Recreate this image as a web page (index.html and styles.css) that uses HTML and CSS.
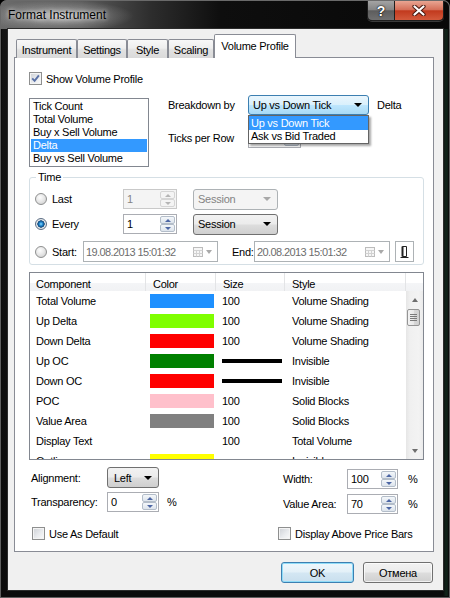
FILE: index.html
```html
<!DOCTYPE html>
<html lang="en">
<head>
<meta charset="utf-8">
<title>Format Instrument</title>
<link rel="stylesheet" href="styles.css">
</head>
<body>
<div class="window">
  <div class="titlebar">
    <div class="title">Format Instrument</div>
    <div class="caps">
      <div class="cap cap-help">?</div>
      <div class="cap cap-close"><svg width="14" height="11" viewBox="0 0 14 11"><path d="M2.5 1.5 L11.5 9.5 M11.5 1.5 L2.5 9.5" stroke="#4a1a10" stroke-width="4.2" stroke-linecap="round"/><path d="M2.5 1.5 L11.5 9.5 M11.5 1.5 L2.5 9.5" stroke="#fff" stroke-width="2.2" stroke-linecap="round"/></svg></div>
    </div>
  </div>
  <div class="client">
    <div class="tabs">
      <div class="tab t-instrument">Instrument</div>
      <div class="tab t-settings">Settings</div>
      <div class="tab t-style">Style</div>
      <div class="tab t-scaling">Scaling</div>
      <div class="tab tab-active t-vp">Volume Profile</div>
    </div>
    <div class="panel">
      <div class="check-row show-vp">
        <span class="cb"><svg width="9" height="9" viewBox="0 0 9 9"><path d="M1.2 4.4 L3.6 6.9 L7.9 1.4" stroke="#5a71a6" stroke-width="1.9" fill="none"/></svg></span>
        <span class="cb-label">Show Volume Profile</span>
      </div>

      <div class="top-row">
        <div class="listbox">
          <div class="li">Tick Count</div>
          <div class="li">Total Volume</div>
          <div class="li">Buy x Sell Volume</div>
          <div class="li li-sel">Delta</div>
          <div class="li">Buy vs Sell Volume</div>
        </div>
        <div class="breakdown">
          <div class="brow">
            <span class="blabel">Breakdown by</span>
            <div class="combo combo-hot w-break">
              <span class="ctext">Up vs Down Tick</span><span class="carrow"></span>
              <div class="droplist">
                <div class="di di-sel">Up vs Down Tick</div>
                <div class="di">Ask vs Bid Traded</div>
              </div>
            </div>
            <span class="delta">Delta</span>
          </div>
          <div class="brow brow2">
            <span class="blabel">Ticks per Row</span>
            <div class="spin w-ticks"><span class="v">1</span><span class="sb"><i class="u"></i><i class="d"></i></span></div>
          </div>
        </div>
      </div>

      <fieldset class="time">
        <legend>Time</legend>
        <div class="trow">
          <span class="radio-l"><span class="radio"></span><span>Last</span></span>
          <div class="spin spin-dis w-tspin"><span class="v">1</span><span class="sb"><i class="u"></i><i class="d"></i></span></div>
          <div class="combo combo-dis w-sess"><span class="ctext">Session</span><span class="carrow"></span></div>
        </div>
        <div class="trow trow2">
          <span class="radio-l"><span class="radio radio-on"></span><span>Every</span></span>
          <div class="spin w-tspin"><span class="v">1</span><span class="sb"><i class="u"></i><i class="d"></i></span></div>
          <div class="combo w-sess"><span class="ctext">Session</span><span class="carrow"></span></div>
        </div>
        <div class="trow trow3">
          <span class="radio-l radio-start"><span class="radio"></span><span>Start:</span></span>
          <div class="dtp w-dtp1"><span class="dtext">19.08.2013 15:01:32</span><svg class="cal" width="10" height="10" viewBox="0 0 10 10"><rect x="0.5" y="0.5" width="9" height="9" fill="#f6f6f6" stroke="#bcbcbc"/><path d="M0.5 3.5H9.5M0.5 6.5H9.5M3.5 3.5V9.5M6.5 3.5V9.5" stroke="#d2d2d2"/></svg><span class="darrow"></span></div>
          <span class="endl">End:</span>
          <div class="dtp w-dtp2"><span class="dtext">20.08.2013 15:01:32</span><svg class="cal" width="10" height="10" viewBox="0 0 10 10"><rect x="0.5" y="0.5" width="9" height="9" fill="#f6f6f6" stroke="#bcbcbc"/><path d="M0.5 3.5H9.5M0.5 6.5H9.5M3.5 3.5V9.5M6.5 3.5V9.5" stroke="#d2d2d2"/></svg><span class="darrow"></span></div>
          <div class="pinbtn"><svg width="9" height="13" viewBox="0 0 9 13"><path d="M2.5 1.5 H6.5 V11.5 H2.5 Z" fill="#fff" stroke="#222"/><path d="M2.5 1.5 V11.5" stroke="#222" stroke-width="2"/><path d="M0.5 12.5 H8.5" stroke="#222"/></svg></div>
        </div>
      </fieldset>

      <div class="grid">
        <div class="ghead">
          <span class="c1">Component</span><span class="c2">Color</span><span class="c3">Size</span><span class="c4">Style</span><span class="c5"></span>
        </div>
        <div class="gbody">
          <div class="rows">
            <div class="row"><span class="c1">Total Volume</span><span class="c2"><i class="sw sw-blue"></i></span><span class="c3">100</span><span class="c4">Volume Shading</span></div>
            <div class="row"><span class="c1">Up Delta</span><span class="c2"><i class="sw sw-lime"></i></span><span class="c3">100</span><span class="c4">Volume Shading</span></div>
            <div class="row"><span class="c1">Down Delta</span><span class="c2"><i class="sw sw-red"></i></span><span class="c3">100</span><span class="c4">Volume Shading</span></div>
            <div class="row"><span class="c1">Up OC</span><span class="c2"><i class="sw sw-green"></i></span><span class="c3"><i class="ln"></i></span><span class="c4">Invisible</span></div>
            <div class="row"><span class="c1">Down OC</span><span class="c2"><i class="sw sw-red"></i></span><span class="c3"><i class="ln"></i></span><span class="c4">Invisible</span></div>
            <div class="row"><span class="c1">POC</span><span class="c2"><i class="sw sw-pink"></i></span><span class="c3">100</span><span class="c4">Solid Blocks</span></div>
            <div class="row"><span class="c1">Value Area</span><span class="c2"><i class="sw sw-gray"></i></span><span class="c3">100</span><span class="c4">Solid Blocks</span></div>
            <div class="row"><span class="c1">Display Text</span><span class="c2"></span><span class="c3">100</span><span class="c4">Total Volume</span></div>
            <div class="row"><span class="c1">Outline</span><span class="c2"><i class="sw sw-yellow"></i></span><span class="c3"></span><span class="c4">Invisible</span></div>
          </div>
          <div class="vscroll">
            <div class="sarrow sup"></div>
            <div class="sthumb"><i></i><i></i><i></i><i></i></div>
            <div class="strack"></div>
            <div class="sarrow sdown"></div>
          </div>
        </div>
      </div>

      <div class="bottom">
        <div class="bleft">
          <div class="lrow lrow1">
            <span class="lab-l">Alignment:</span>
            <div class="combo w-align"><span class="ctext">Left</span><span class="carrow"></span></div>
          </div>
          <div class="lrow lrow2">
            <span class="lab-l">Transparency:</span>
            <div class="spin w-small"><span class="v">0</span><span class="sb"><i class="u"></i><i class="d"></i></span></div>
            <span class="pct">%</span>
          </div>
          <div class="lrow lrow3">
            <span class="cb cb-l"></span><span class="cb-label">Use As Default</span>
          </div>
        </div>
        <div class="bright">
          <div class="lrow rrow1">
            <span class="lab-r">Width:</span>
            <div class="spin w-rspin"><span class="v">100</span><span class="sb"><i class="u"></i><i class="d"></i></span></div>
            <span class="pct-r">%</span>
          </div>
          <div class="lrow rrow2">
            <span class="lab-r">Value Area:</span>
            <div class="spin w-rspin"><span class="v">70</span><span class="sb"><i class="u"></i><i class="d"></i></span></div>
            <span class="pct-r">%</span>
          </div>
          <div class="lrow rrow3">
            <span class="cb"></span><span class="cb-label">Display Above Price Bars</span>
          </div>
        </div>
      </div>
    </div>
    <div class="buttons">
      <div class="btn btn-ok">OK</div>
      <div class="btn btn-cancel">Отмена</div>
    </div>
  </div>
</div>
</body>
</html>
```

FILE: styles.css
```css
* { box-sizing: border-box; }
html, body { margin: 0; padding: 0; }
body {
  width: 450px; height: 598px; overflow: hidden;
  background: #000;
  font-family: "Liberation Sans", Arial, sans-serif;
  font-size: 11px;
  letter-spacing: -0.25px;
  color: #000;
}

/* ---------- window frame ---------- */
.window {
  width: 450px; height: 598px;
  display: flex; flex-direction: column;
  border-radius: 7px 7px 0 0;
  background:
    linear-gradient(90deg, rgba(0,0,0,0) 443px, #11241a 446px, #0a140e 450px),
    linear-gradient(180deg, #141414 0, #0b0b0b 100%);
  box-shadow: inset 0 0 0 1px #5f5f5f, inset 0 0 0 2px #0c0c0c;
}
.titlebar {
  height: 29px; flex: none;
  display: flex; align-items: flex-start;
  border-radius: 7px 7px 0 0;
  border: 1px solid #6a6a6a; border-bottom: 0;
  background:
    radial-gradient(ellipse 75px 16px at 58px 15px, rgba(215,215,215,0.75) 0, rgba(160,160,160,0.35) 60%, rgba(0,0,0,0) 100%),
    linear-gradient(90deg, #6a6a6a 0, #5c5c5c 80px, #2d2d2d 150px, #0e0e0e 220px, #080808 100%);
}
.title {
  margin: 6px 0 0 7px;
  font-size: 12px; line-height: 16px; letter-spacing: 0;
  color: #000;
  text-shadow: 0 0 4px rgba(255,255,255,0.8), 0 0 8px rgba(255,255,255,0.5);
}
.caps {
  margin-left: auto; margin-right: 5px;
  display: flex; height: 20px;
  border: 1px solid #1e1e1e; border-top: 0;
  border-radius: 0 0 5px 5px;
  overflow: hidden;
  box-shadow: 0 1px 0 rgba(255,255,255,0.2);
}
.cap { display: flex; align-items: center; justify-content: center; }
.cap-help {
  width: 27px;
  border-right: 1px solid #1e1e1e;
  background: linear-gradient(#a4a4a4 0, #858585 45%, #5d5d5d 52%, #707070 100%);
  color: #fff; font-weight: bold; font-size: 14px; letter-spacing: 0;
  text-shadow: 0 0 2px #000, 0 0 1px #000;
}
.cap-close {
  width: 48px;
  background: linear-gradient(#e9a592 0, #d5705a 45%, #c23a1e 52%, #d35a3c 100%);
}

/* ---------- client ---------- */
.client {
  margin: 0 7px 0 8px;
  height: 561px; flex: none;
  background: #f0f0f0;
  display: flex; flex-direction: column;
  box-shadow: 0 0 0 1px #2b2b2b;
}

.tabs {
  display: flex; align-items: flex-end;
  height: 24px;
  margin: 5px 0 -1px 8px;
  position: relative; z-index: 1;
}
.tab {
  height: 19px;
  border: 1px solid #898c95; border-bottom: 0;
  border-radius: 2px 2px 0 0;
  background: linear-gradient(#f8f8f8 0, #eeeeee 45%, #e1e1e1 55%, #dadada 100%);
  text-align: center;
  padding-top: 1px; line-height: 18px;
  white-space: nowrap;
}
.t-instrument { width: 61px; }
.t-settings { width: 50px; }
.t-style { width: 41px; }
.t-scaling { width: 46px; }
.tab-active {
  width: 82px; height: 24px;
  background: #fff;
  padding-top: 1px; line-height: 20px;
}

.panel {
  margin-left: 6px;
  width: 420px; height: 495px; flex: none;
  border: 1px solid #898c95;
  background: #fff;
  padding-left: 14px;
  display: flex; flex-direction: column; align-items: flex-start;
}

/* checkbox */
.cb {
  width: 13px; height: 13px; flex: none;
  border: 1px solid #8e8f8f;
  background: linear-gradient(135deg, #cdd0d5 0, #e9ebee 55%, #fbfbfb 100%);
  box-shadow: inset 0 0 0 1px #f4f4f4;
  display: flex; align-items: center; justify-content: center;
}
.check-row, .lrow3, .rrow3 { display: flex; align-items: center; height: 13px; }
.cb-label { margin-left: 4px; white-space: nowrap; }
.show-vp { margin-top: 14px; }

/* top row */
.top-row { display: flex; margin-top: 10px; height: 72px; }
.listbox {
  margin-top: 3px;
  width: 120px; height: 69px;
  border: 1px solid #828790;
  padding: 1px;
}
.li { height: 13px; line-height: 13px; padding-left: 2px; white-space: nowrap; }
.li-sel { background: #3399ff; color: #fff; }

.breakdown { margin-left: 19px; }
.brow { display: flex; align-items: center; height: 20px; }
.brow2 { margin-top: 13px; }
.blabel { width: 80px; white-space: nowrap; }
.delta { margin-left: 8px; }

/* combo */
.combo {
  position: relative;
  display: flex; align-items: center;
  height: 20px;
  border: 1px solid #707070;
  border-radius: 3px;
  background: linear-gradient(#f2f2f2 0, #ebebeb 49%, #dddddd 51%, #cfcfcf 100%);
  padding: 0 6px 0 4px;
  white-space: nowrap;
}
.ctext { flex: 1; }
.carrow {
  width: 0; height: 0;
  border-left: 4px solid transparent;
  border-right: 4px solid transparent;
  border-top: 4px solid #000;
}
.combo-dis { border-color: #adb2b5; background: #f4f4f4; color: #838383; }
.combo-dis .carrow { border-top-color: #a8a8a8; }
.combo-hot {
  border-color: #3c7fb1;
  background: linear-gradient(#eaf6fd 0, #d9f0fc 49%, #bee6fd 51%, #a7d9f5 100%);
}
.w-break { width: 121px; }
.w-sess { width: 85px; height: 21px; }
.w-align { width: 52px; height: 21px; padding-left: 6px; }

.droplist {
  position: absolute; z-index: 5;
  top: calc(100% + 1px); left: -1px;
  width: 121px;
  border: 1px solid #646464;
  background: #fff;
  box-shadow: 2px 2px 2px rgba(0,0,0,0.35);
}
.di { height: 14px; line-height: 14px; padding-left: 2px; }
.di + .di { height: 13px; line-height: 13px; }
.di-sel { background: #3399ff; color: #fff; }

/* spinner */
.spin {
  display: flex; height: 20px;
  border: 1px solid #abadb3;
  background: #fff;
}
.spin .v { flex: 1; padding-left: 3px; line-height: 18px; }
.spin .sb { width: 16px; display: flex; flex-direction: column; padding: 1px 1px 1px 0; }
.spin .sb i {
  flex: 1;
  display: flex; align-items: center; justify-content: center;
  border: 1px solid #b3bdc9;
  border-radius: 2px;
  background: linear-gradient(#f4f7fa, #dde4ec);
}
.spin .sb i::after {
  content: ""; width: 0; height: 0;
  border-left: 3px solid transparent;
  border-right: 3px solid transparent;
}
.spin .sb .u::after { border-bottom: 3px solid #4c66a4; }
.spin .sb .d::after { border-top: 3px solid #4c66a4; }
.spin-dis { border-color: #c9c9c9; background: #f4f4f4; color: #838383; }
.spin-dis .sb i { border-color: #d5d5d5; background: #f4f4f4; }
.spin-dis .sb .u::after { border-bottom-color: #b5b5b5; }
.spin-dis .sb .d::after { border-top-color: #b5b5b5; }
.w-ticks { width: 53px; }
.w-tspin { width: 54px; margin-right: 16px; }
.w-small { width: 52px; }
.w-rspin { width: 51px; }

/* time group */
.time {
  margin: 4px 0 0 0;
  padding: 6px 0 2px 5px;
  width: 395px; min-width: 0;
  border: 1px solid #d5dfe5;
  border-radius: 3px;
}
.time legend { padding: 0 2px; margin-left: 1px; line-height: 12px; }
.trow { display: flex; align-items: center; height: 20px; }
.trow2 { margin-top: 5px; }
.trow3 { margin-top: 7px; height: 21px; }
.radio-l { display: flex; align-items: center; width: 88px; }
.radio-start { width: 48px; }
.radio {
  width: 12px; height: 12px; flex: none;
  margin-right: 5px;
  border-radius: 50%;
  border: 1px solid #8e8f8f;
  background: radial-gradient(circle at 40% 35%, #fdfdfd 0, #e8e8e8 45%, #c8c8c8 100%);
}
.radio-on {
  border-color: #5d6f86;
  background: radial-gradient(circle at 50% 50%, #8fe0ff 0, #2a8fd6 1.6px, #0b4274 3.4px, #e9ecef 3.9px, #d2d2d2 100%);
}
.dtp {
  display: flex; align-items: center;
  height: 21px;
  border: 1px solid #adb2b5;
  background: #fff;
  color: #6d6d6d;
  padding: 0 5px 0 2px;
}
.dtext { flex: 1; letter-spacing: -0.6px; white-space: nowrap; }
.darrow {
  margin-left: 3px;
  width: 0; height: 0;
  border-left: 3.5px solid transparent;
  border-right: 3.5px solid transparent;
  border-top: 4px solid #a9a9a9;
}
.w-dtp1 { width: 135px; }
.w-dtp2 { width: 136px; }
.endl { margin-left: 14px; width: 22px; }
.pinbtn {
  margin-left: 5px;
  width: 19px; height: 21px;
  border: 1px solid #adb2b5;
  background: #fff;
  display: flex; align-items: center; justify-content: center;
}

/* grid */
.grid {
  margin-top: 7px;
  width: 395px; height: 188px;
  border: 1px solid #828790;
  background: #fff;
  display: flex; flex-direction: column;
}
.ghead {
  display: flex; height: 18px; flex: none;
  background: linear-gradient(#fff 0, #fff 55%, #f4f5f7 56%, #f1f2f4 100%);
}
.ghead span {
  border-right: 1px solid #e3e4e6;
  padding-top: 5px; line-height: 13px;
}
.ghead .c2, .ghead .c3, .ghead .c4 { padding-left: 7px; }
.ghead .c5 { border-right: 0; }
.c1 { width: 116px; padding-left: 6px; white-space: nowrap; flex: none; }
.c2 { width: 70px; flex: none; }
.c3 { width: 69px; flex: none; }
.c4 { width: 121px; flex: none; white-space: nowrap; }
.c5 { width: 17px; flex: none; }
.gbody { display: flex; flex: 1; overflow: hidden; }
.rows { width: 376px; overflow: hidden; }
.row { display: flex; align-items: center; height: 20px; flex: none; }
.row .c2 { padding-left: 4px; height: 20px; display: flex; align-items: center; }
.row .c3 { padding-left: 6px; }
.row .c4 { padding-left: 7px; }
.sw { display: block; width: 64px; height: 14px; }
.sw-blue { background: #1e90ff; }
.sw-lime { background: #7fff00; }
.sw-red { background: #ff0000; }
.sw-green { background: #008000; }
.sw-pink { background: #ffc0cb; }
.sw-gray { background: #808080; }
.sw-yellow { background: #ffff00; }
.ln { display: block; width: 60px; height: 4px; background: #000; }

.vscroll {
  width: 17px; flex: none;
  display: flex; flex-direction: column;
  background: linear-gradient(90deg, #e6e6e6 0, #f0f0f0 25%, #f3f3f3 75%, #ebebeb 100%);
}
.sarrow { height: 17px; display: flex; align-items: center; justify-content: center; flex: none; }
.sup::after, .sdown::after {
  content: ""; width: 0; height: 0;
  border-left: 3.5px solid transparent;
  border-right: 3.5px solid transparent;
}
.sup::after { border-bottom: 4px solid #6e6e6e; }
.sdown::after { border-top: 4px solid #6e6e6e; }
.sthumb {
  height: 17px; flex: none;
  margin: 1px 3px 0 1px;
  border: 1px solid #959595;
  border-radius: 2px;
  background: linear-gradient(90deg, #f3f3f3 0, #e8e8e8 50%, #d8d8d8 51%, #d0d0d0 100%);
  display: flex; flex-direction: column; align-items: center; justify-content: center; gap: 1px;
}
.sthumb i { display: block; width: 7px; height: 1px; background: #7a7a7a; }
.strack { flex: 1; }

/* bottom */
.bottom { display: flex; width: 395px; margin-top: 7px; }
.bleft { margin-left: 2px; }
.lrow { display: flex; align-items: center; }
.lrow1 { height: 21px; }
.lrow2 { margin-top: 4px; height: 20px; }
.lrow3 { margin-top: 15px; }
.lab-l { width: 76px; white-space: nowrap; }
.pct { margin-left: 8px; }
.cb-l { margin-left: 1px; }
.bright { margin-left: auto; width: 146px; }
.rrow1 { margin-top: 2px; padding-left: 5px; height: 20px; }
.rrow2 { margin-top: 5px; padding-left: 5px; height: 20px; }
.rrow3 { margin-top: 13px; }
.lab-r { width: 64px; white-space: nowrap; }
.pct-r { margin-left: 10px; }

/* buttons */
.buttons {
  display: flex; justify-content: flex-end; gap: 9px;
  margin: 10px 0 0 6px;
  width: 419px;
}
.btn {
  height: 21px;
  border: 1px solid #707070;
  border-radius: 3px;
  background: linear-gradient(#f2f2f2 0, #ebebeb 49%, #dddddd 51%, #cfcfcf 100%);
  box-shadow: inset 0 0 0 1px rgba(255,255,255,0.7);
  display: flex; align-items: center; justify-content: center;
}
.btn-ok {
  width: 73px;
  border-color: #3c7fb1;
  box-shadow: inset 0 0 0 1px #8fdcf8;
  background: linear-gradient(#eef7fc 0, #e3f0f8 49%, #d4e7f3 51%, #c9dfee 100%);
}
.btn-cancel { width: 70px; }
```
